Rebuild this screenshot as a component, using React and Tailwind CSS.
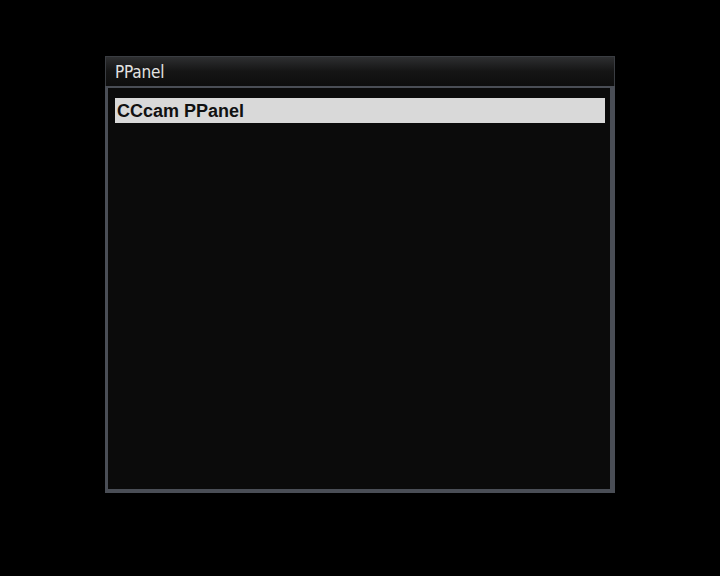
export default function App() {
  return (
    <div className="w-[720px] h-[576px] bg-black relative overflow-hidden">
      <div className="absolute left-[105px] top-[56px] w-[510px] h-[437px] flex flex-col">
        <div className="h-[30px] flex items-center pl-[9px] border-t border-l border-r border-[#3a3d42] bg-gradient-to-b from-[#2e2f31] via-[#151515] to-[#0e0e0e]">
          <span className="text-[17px] text-[#e2e2e2] leading-none pt-[2px] tracking-[-0.2px]" style={{ fontFamily: '"DejaVu Sans Condensed", "Liberation Sans Narrow", "Liberation Sans", sans-serif' }}>PPanel</span>
        </div>
        <div className="flex-1 flex flex-col bg-[#0b0b0b] border-t-2 border-l-[3px] border-r-[5px] border-b-[4px] border-[#4a4e56] px-[7px] pt-[10px]">
          <div className="h-[25px] w-[490px] bg-[#d9d9d9] flex items-center pl-[2px]">
            <span className="text-[18px] font-bold text-[#111] leading-none" style={{ fontFamily: '"Liberation Sans", Arial, sans-serif' }}>CCcam PPanel</span>
          </div>
        </div>
      </div>
    </div>
  );
}
